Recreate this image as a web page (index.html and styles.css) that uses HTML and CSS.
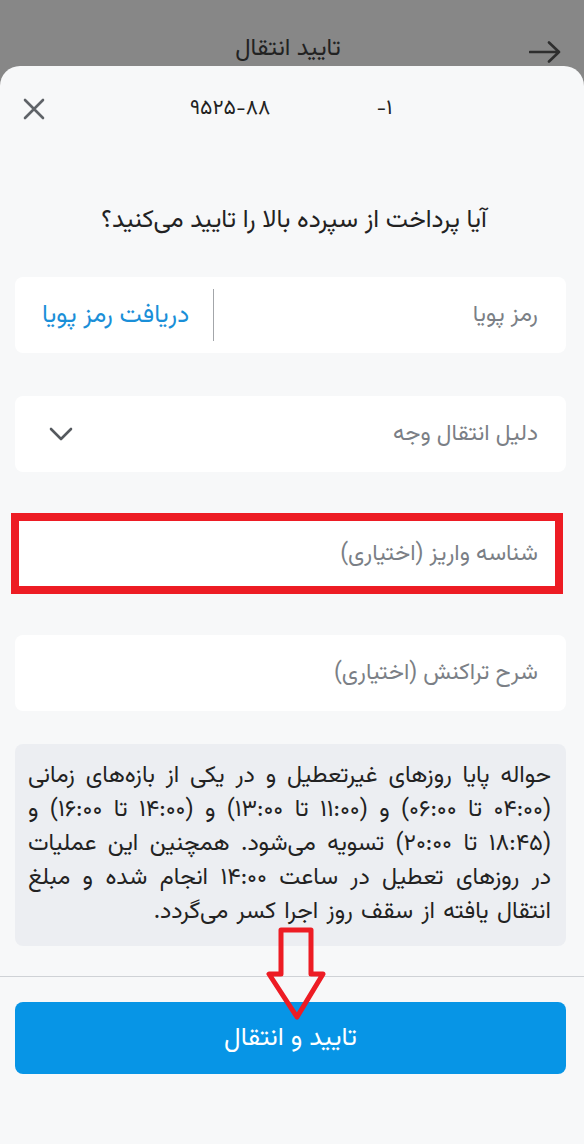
FILE: index.html
```html
<!DOCTYPE html>
<html lang="fa" dir="rtl">
<head>
<meta charset="utf-8">
<title>تایید انتقال</title>
<link rel="stylesheet" href="styles.css">
</head>
<body>
<div class="page">
  <header class="topbar">
    <svg class="back" viewBox="0 0 32 22" width="32" height="22" aria-hidden="true"><path d="M1 11H30M20 1.5L30 11L20 20.5" fill="none" stroke="#2e2e2e" stroke-width="2.6" stroke-linecap="round" stroke-linejoin="round"/></svg>
    <div class="title">تایید انتقال</div>
    <div class="back-spacer"></div>
  </header>

  <main class="sheet">
    <div class="sheet-head" dir="ltr">
      <svg class="close" viewBox="0 0 22 22" width="22" height="22" aria-hidden="true"><path d="M2 2L20 20M20 2L2 20" stroke="#5f6368" stroke-width="2.6" stroke-linecap="round"/></svg>
      <span class="acc acc-main">۹۵۲۵-۸۸</span>
      <span class="acc acc-tail">-۱</span>
    </div>

    <p class="question">آیا پرداخت از سپرده بالا را تایید می‌کنید؟</p>

    <div class="field field-otp">
      <span class="ph">رمز پویا</span>
      <span class="sep"></span>
      <span class="otp-link">دریافت رمز پویا</span>
    </div>

    <div class="field field-select">
      <span class="ph">دلیل انتقال وجه</span>
      <svg class="chev" viewBox="0 0 24 14" width="24" height="14" aria-hidden="true"><path d="M2 2L12 12L22 2" fill="none" stroke="#55595e" stroke-width="2.6" stroke-linecap="round" stroke-linejoin="round"/></svg>
    </div>

    <div class="field field-marked">
      <span class="ph">شناسه واریز (اختیاری)</span>
    </div>

    <div class="field field-desc">
      <span class="ph">شرح تراکنش (اختیاری)</span>
    </div>

    <div class="notice">حواله پایا روزهای غیرتعطیل و در یکی از بازه‌های زمانی (۰۴:۰۰ تا ۰۶:۰۰) و (۱۱:۰۰ تا ۱۳:۰۰) و (۱۴:۰۰ تا ۱۶:۰۰) و (۱۸:۴۵ تا ۲۰:۰۰) تسویه می‌شود. همچنین این عملیات در روزهای تعطیل در ساعت ۱۴:۰۰ انجام شده و مبلغ انتقال یافته از سقف روز اجرا کسر می‌گردد.</div>

    <hr class="divider">

    <button class="confirm" type="button">تایید و انتقال</button>
  </main>

  <svg class="annot-arrow" viewBox="0 0 68 100" width="68" height="100" aria-hidden="true"><path d="M19 6H49V50H61L35 93L7 50H19Z" fill="none" stroke="#ed1c24" stroke-width="5" stroke-linejoin="round"/></svg>
</div>
</body>
</html>
```

FILE: styles.css
```css
* { box-sizing: border-box; }

html, body {
  margin: 0;
  padding: 0;
}

body {
  background: #f7f8f9;
  font-family: "Vazirmatn", "Noto Sans Arabic", "DejaVu Sans", sans-serif;
  color: #222;
}

.page {
  position: relative;
  width: 584px;
  min-height: 1144px;
  background: #878787;
}

.topbar {
  height: 66px;
  display: flex;
  align-items: flex-start;
  padding: 33px 23px 0 23px;
}

.back {
  display: block;
  margin-top: 8px;
  flex: none;
}

.title {
  flex: 1;
  text-align: center;
  font-size: 24px;
  line-height: 32px;
  color: #222;
  margin-right: 8px;
}

.back-spacer {
  width: 32px;
  flex: none;
}

.sheet {
  background: #f7f8f9;
  border-radius: 20px 20px 0 0;
  min-height: 1078px;
  padding: 30px 0 0 0;
  display: flex;
  flex-direction: column;
}

.sheet-head {
  height: 26px;
  display: flex;
  align-items: center;
  padding-left: 23px;
}

.close { display: block; flex: none; }

.acc {
  font-size: 21px;
  line-height: 26px;
  color: #222;
  white-space: nowrap;
}

.acc-main { margin-left: 145px; }
.acc-tail { margin-left: 106px; }

.question {
  margin: 83px 0 0 0;
  text-align: center;
  font-size: 25px;
  line-height: 32px;
  color: #222;
  padding-left: 4px;
}

.field {
  margin: 0 18px 0 15px;
  height: 76px;
  background: #fff;
  border-radius: 8px;
  display: flex;
  align-items: center;
}

.ph {
  font-size: 23px;
  color: #7b7f86;
  white-space: nowrap;
}

.field-otp { margin-top: 40px; padding-right: 28px; }
.field-otp .ph { flex: 1; }

.sep {
  width: 1px;
  height: 52px;
  background: #a3a6aa;
  flex: none;
}

.otp-link {
  font-size: 25px;
  color: #1a8fd8;
  padding: 0 24px 0 27px;
  white-space: nowrap;
}

.field-select {
  margin-top: 43px;
  padding: 0 28px 0 34px;
  justify-content: space-between;
}

.chev { display: block; }

.field-marked {
  margin: 41px 21px 0 11px;
  height: 81px;
  border: 8px solid #ed1c24;
  border-radius: 0;
  padding-right: 17px;
}

.field-desc {
  margin-top: 41px;
  padding-right: 28px;
}

.notice {
  margin: 33px 18px 0 15px;
  height: 202px;
  background: #eceef2;
  border-radius: 8px;
  padding: 16px 15px 0 13px;
  font-size: 23.5px;
  line-height: 34px;
  word-spacing: 2px;
  text-align: justify;
  color: #222;
}

.divider {
  margin: 30px 0 0 0;
  border: 0;
  height: 1px;
  background: #cfd2d6;
}

.confirm {
  margin: 25px 18px 0 15px;
  height: 72px;
  border: 0;
  border-radius: 8px;
  background: #0795e6;
  color: #fff;
  font-family: inherit;
  font-size: 26px;
}

.annot-arrow {
  position: absolute;
  left: 262px;
  top: 924px;
}
```
